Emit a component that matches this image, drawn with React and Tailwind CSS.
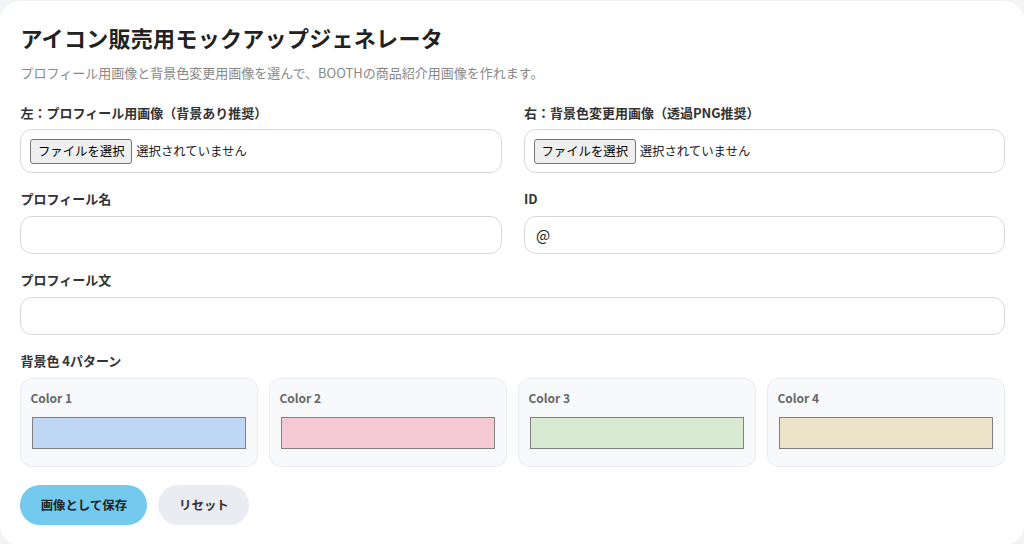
const colors = [
  { name: 'Color 1', swatch: 'bg-[#bdd7f5]' },
  { name: 'Color 2', swatch: 'bg-[#f5c9d4]' },
  { name: 'Color 3', swatch: 'bg-[#d9ead3]' },
  { name: 'Color 4', swatch: 'bg-[#ede3c8]' },
]

const FilePicker = ({ label }) => (
  <div>
    <p className="text-[13px] leading-[18px] font-bold text-[#333] mb-[7px]">{label}</p>
    <div className="h-[44px] flex items-center px-[9px] bg-white border border-[#d5d9de] rounded-[12px] text-[12.4px] text-[#222]">
      <span className="h-[25px] flex items-center px-[6.5px] bg-[#efefef] border border-[#767676] rounded-[3px] mr-[4px] text-black">ファイルを選択</span>
      <span>選択されていません</span>
    </div>
  </div>
)

const TextField = ({ label, value }) => (
  <div>
    <p className="text-[13px] leading-[18px] font-bold text-[#333] mb-[8px]">{label}</p>
    <div className="h-[38px] flex items-center px-[11px] bg-white border border-[#d5d9de] rounded-[12px] text-[15px] text-[#222]">{value}</div>
  </div>
)

const App = () => (
  <div className="w-[1024px] h-[544px] overflow-hidden bg-[#f1f3f5] pt-px font-['Noto_Sans_CJK_JP','Noto_Sans',sans-serif]">
    <div className="h-[544px] bg-white rounded-[20px] pl-[20.4px] pt-[20px]">
      <h1 className="text-[22px] leading-[32px] font-bold text-[#222] tracking-[0.3px]">アイコン販売用モックアップジェネレータ</h1>
      <p className="mt-[11px] text-[13px] leading-[18px] text-[#888]">プロフィール用画像と背景色変更用画像を選んで、BOOTHの商品紹介用画像を作れます。</p>

      <div className="mt-[22px] grid grid-cols-2 gap-x-[22px] w-[985px]">
        <FilePicker label="左：プロフィール用画像（背景あり推奨）" />
        <FilePicker label="右：背景色変更用画像（透過PNG推奨）" />
      </div>

      <div className="mt-[17px] grid grid-cols-2 gap-x-[22px] w-[985px]">
        <TextField label="プロフィール名" />
        <TextField label="ID" value="@" />
      </div>

      <div className="mt-[17px] w-[985px]">
        <TextField label="プロフィール文" />
      </div>

      <p className="mt-[17px] text-[13px] leading-[18px] font-bold text-[#333] mb-[8px]">背景色 4パターン</p>
      <div className="grid grid-cols-4 gap-x-[11px] w-[985px]">
        {colors.map((c) => (
          <div key={c.name} className="h-[89px] px-[9px] pt-[10px] bg-[#f8f9fb] border border-[#e8ebef] rounded-[12px]">
            <p className="text-[12px] leading-[18px] font-semibold text-[#666]">{c.name}</p>
            <div className={`mt-[10px] mx-[2px] h-[32px] border border-[#808080] ${c.swatch}`}></div>
          </div>
        ))}
      </div>

      <div className="mt-[18px] flex gap-[11px]">
        <button className="w-[127px] h-[40px] rounded-full bg-[#74c9ee] text-[12.4px] font-bold text-[#222]">画像として保存</button>
        <button className="w-[91px] h-[40px] rounded-full bg-[#e9edf1] text-[12.4px] font-bold text-[#333]">リセット</button>
      </div>
    </div>
  </div>
)

export default App
